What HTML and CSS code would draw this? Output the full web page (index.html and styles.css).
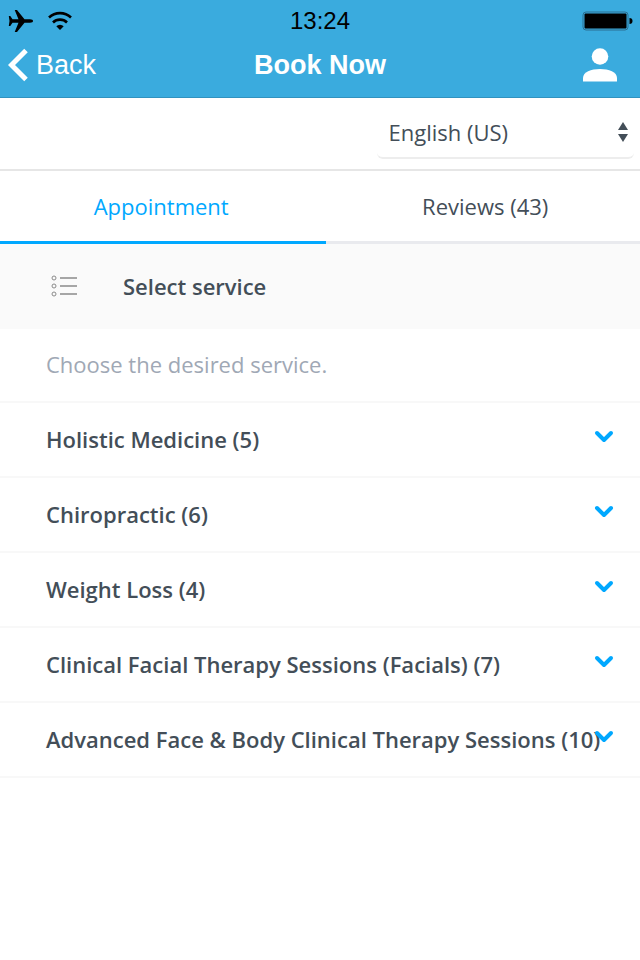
FILE: index.html
```html
<!DOCTYPE html>
<html lang="en">
<head>
    <meta charset="UTF-8">
    <meta name="viewport" content="width=device-width, initial-scale=1.0">
    <title>Book Now</title>
    <link rel="stylesheet" href="styles.css">
</head>
<body>

    <header class="header">
        <div class="status-bar">
            <div class="status-left">
                <svg width="26" height="24" viewBox="0 0 26 24" aria-hidden="true">
                    <path d="M25 12c0-1-1-1.700-3-1.700h-5.500L9 1H6.700l3.800 9.300H4.500L2.300 7H.8l.7 5-.7 5h1.500l2.200-3.300h6L6.700 23H9l7.500-9.300H22c2 0 3-.7 3-1.700z"/>
                </svg>
                <svg width="26" height="20" viewBox="0 0 26 20" fill="none" stroke="#000" aria-hidden="true">
                    <path d="M2 6.500a16 16 0 0 1 22 0" stroke-width="2.600"/>
                    <path d="M6 11.500a10 10 0 0 1 14 0" stroke-width="2.600"/>
                    <path d="M13 19l-3.700-3.700a5 5 0 0 1 7.400 0z" fill="#000" stroke="none"/>
                </svg>
            </div>
            <time class="clock">13:24</time>
            <div class="status-right">
                <svg width="52" height="20" viewBox="0 0 52 20" aria-hidden="true">
                    <rect x="1" y="1" width="45" height="18" rx="3" fill="none" stroke="#2b6f91"/>
                    <rect x="2.500" y="2.500" width="42" height="15" rx="1"/>
                    <path d="M47.500 7c2 0 3 1.300 3 3s-1 3-3 3z"/>
                </svg>
            </div>
        </div>
        <nav class="nav-bar">
            <a class="back" href="#">
                <svg width="20" height="34" viewBox="0 0 20 34" fill="none" stroke="#fff" stroke-width="5" aria-hidden="true">
                    <path d="M18 2.500L3.500 17 18 31.500"/>
                </svg>
                Back
            </a>
            <h1>Book Now</h1>
            <button class="profile" type="button" aria-label="Profile">
                <svg width="34" height="34" viewBox="0 0 34 34" fill="#fff" aria-hidden="true">
                    <circle cx="17" cy="8.500" r="8.300"/>
                    <path d="M0 33.500V30c0-6 8-9 17-9s17 3 17 9v3.500z"/>
                </svg>
            </button>
        </nav>
    </header>

    <div class="language-bar">
        <div class="language">
            <select aria-label="Language">
                <option>English (US)</option>
            </select>
            <svg class="arrows" width="12" height="20" viewBox="0 0 12 20" fill="#434e58" aria-hidden="true">
                <path d="M6 0l5 8H1zM6 20l5-8H1z"/>
            </svg>
        </div>
    </div>

    <nav class="tabs">
        <a class="tab active" href="#">Appointment</a>
        <a class="tab" href="#">Reviews (43)</a>
    </nav>

    <main>
        <div class="step">
            <svg width="26" height="22" viewBox="0 0 26 22" fill="none" stroke="#8a8a8a" aria-hidden="true">
                <circle cx="3" cy="3" r="2"/>
                <circle cx="3" cy="11" r="2"/>
                <circle cx="3" cy="19" r="2"/>
                <path d="M9 3h17M9 11h17M9 19h17" stroke-width="1.500"/>
            </svg>
            <h2>Select service</h2>
        </div>
        <p class="hint">Choose the desired service.</p>
        <div class="services">
            <button class="service" type="button">Holistic Medicine (5)
                <svg class="chevron" width="20" height="14" viewBox="0 0 20 14" aria-hidden="true"><path d="M3 3l7 7 7-7"/></svg>
            </button>
            <button class="service" type="button">Chiropractic (6)
                <svg class="chevron" width="20" height="14" viewBox="0 0 20 14" aria-hidden="true"><path d="M3 3l7 7 7-7"/></svg>
            </button>
            <button class="service" type="button">Weight Loss (4)
                <svg class="chevron" width="20" height="14" viewBox="0 0 20 14" aria-hidden="true"><path d="M3 3l7 7 7-7"/></svg>
            </button>
            <button class="service" type="button">Clinical Facial Therapy Sessions (Facials) (7)
                <svg class="chevron" width="20" height="14" viewBox="0 0 20 14" aria-hidden="true"><path d="M3 3l7 7 7-7"/></svg>
            </button>
            <button class="service" type="button">Advanced Face &amp; Body Clinical Therapy Sessions (10)
                <svg class="chevron" width="20" height="14" viewBox="0 0 20 14" aria-hidden="true"><path d="M3 3l7 7 7-7"/></svg>
            </button>
        </div>
    </main>

</body>
</html>
```
FILE: styles.css
```css
* {
    box-sizing: border-box;
}

body {
    margin: 0;
    font-family: "Open Sans", sans-serif;
    font-size: 22px;
    line-height: 30px;
    color: #434e58;
    background-color: #fff;
}

a {
    color: inherit;
    text-decoration: none;
}

button {
    border: 0;
    padding: 0;
    background: none;
    font: inherit;
    color: inherit;
    cursor: pointer;
}

svg {
    display: block;
}

/* header */
.header {
    background-color: #3aabde;
    border-bottom: 1px solid #3192bf;
    font-family: "Liberation Sans", Arial, sans-serif;
}

.status-bar,
.nav-bar {
    display: grid;
    grid-template-columns: 1fr auto 1fr;
    align-items: center;
    padding: 0 8px;
}

.status-bar {
    height: 41px;
    color: #000;
}

.status-left {
    display: flex;
    align-items: center;
    gap: 13px;
}

.status-right {
    justify-self: end;
    margin-right: -2px;
}

.clock {
    font-size: 24px;
}

.nav-bar {
    padding-bottom: 9px;
    height: 56px;
    color: #fff;
}

.back {
    display: flex;
    align-items: center;
    gap: 8px;
    font-size: 27px;
}

.nav-bar h1 {
    margin: 0;
    font-size: 27px;
    line-height: 30px;
}

.profile {
    justify-self: end;
    margin-right: 15px;
}

/* language */
.language-bar {
    display: flex;
    justify-content: flex-end;
    padding: 8px 6px 10px;
    border-bottom: 2px solid #e6e6e6;
}

.language {
    position: relative;
    width: 41%;
}

.language select {
    appearance: none;
    width: 100%;
    height: 53px;
    padding: 0 30px 0 12px;
    border: 0;
    border-bottom: 2px solid #ededed;
    border-radius: 6px;
    background-color: #fff;
    font: inherit;
    color: inherit;
}

.arrows {
    position: absolute;
    top: 16px;
    right: 5px;
    pointer-events: none;
}

/* tabs */
.tabs {
    display: flex;
}

.tab {
    flex: 1;
    padding: 20px 0 20px 4px;
    border-bottom: 3px solid #e9eaee;
    text-align: center;
}

.tab.active {
    flex: 0 0 51%;
    padding: 20px 4px 20px 0;
    border-color: #00a8ff;
    color: #00a8ff;
}

/* services */
.step {
    display: flex;
    align-items: center;
    gap: 46px;
    height: 85px;
    padding: 0 51px 2px;
    background-color: #fafafa;
}

.step h2 {
    margin: 0;
    font-size: 22px;
    font-weight: 600;
}

.hint {
    margin: 0;
    padding: 20px 46px 22px;
    color: #a0a8b5;
}

.service {
    position: relative;
    display: block;
    width: 100%;
    height: 75px;
    padding: 0 30px 2px 46px;
    border-top: 2px solid #f8f8f8;
    text-align: left;
    font-weight: 600;
}

.services {
    border-bottom: 2px solid #f8f8f8;
}

.chevron {
    position: absolute;
    top: 27px;
    right: 26px;
    fill: none;
    stroke: #00a8ff;
    stroke-width: 4;
    stroke-linecap: round;
    stroke-linejoin: round;
}
```
